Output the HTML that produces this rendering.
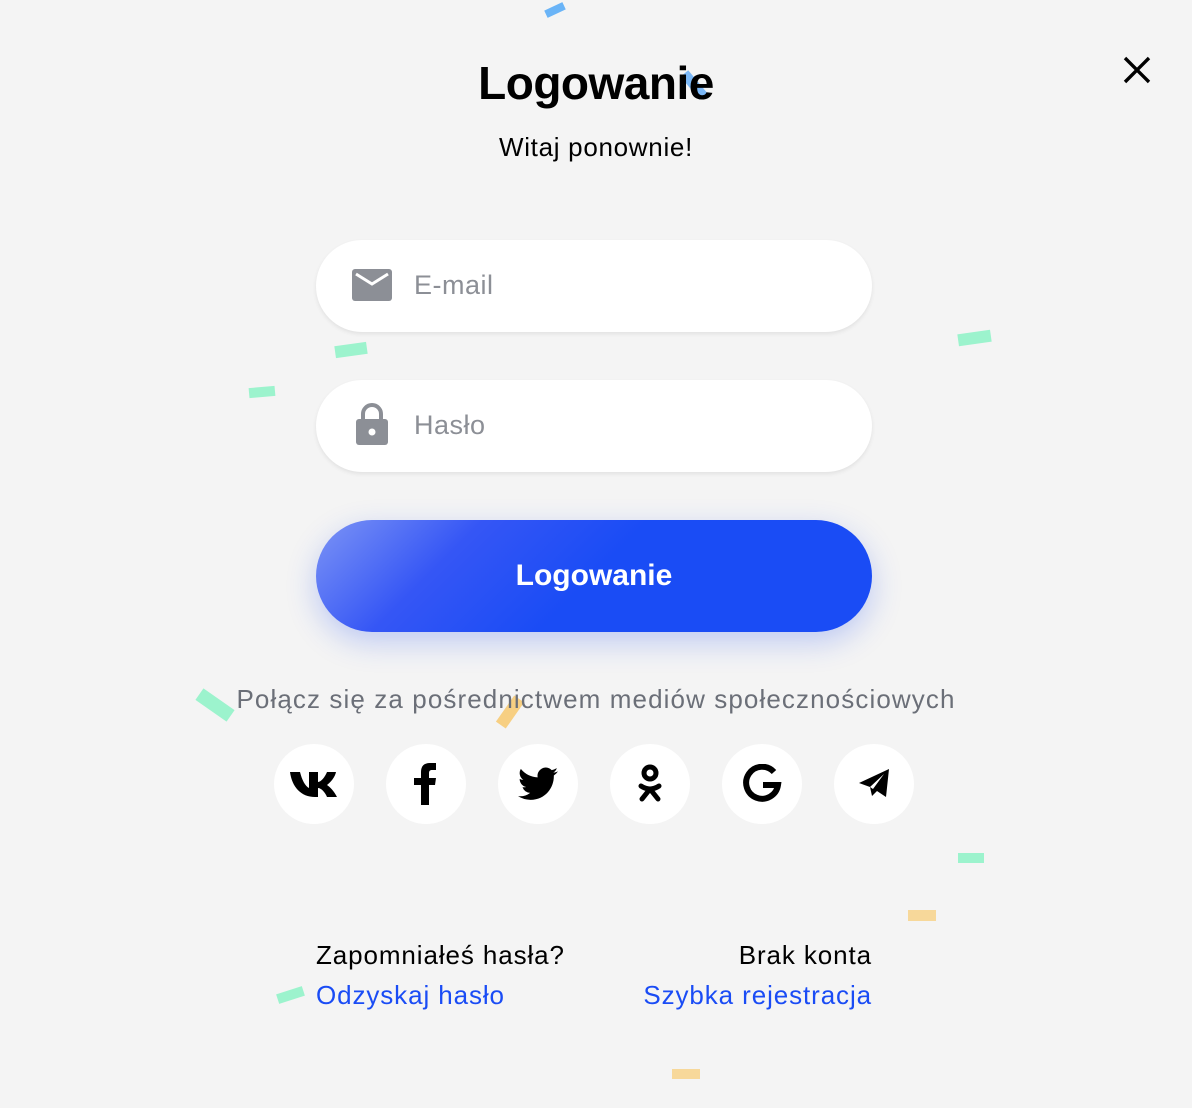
<!DOCTYPE html>
<html><head><meta charset="utf-8"><style>
*{margin:0;padding:0;box-sizing:border-box}
body{width:1192px;height:1108px;background:#f4f4f4;font-family:"Liberation Sans",sans-serif;position:relative;overflow:hidden}
.a{position:absolute}
h1{position:absolute;left:0;right:0;top:56px;text-align:center;font-size:46px;font-weight:bold;color:#000;letter-spacing:-0.5px}
.sub{top:132px;left:0;right:0;text-align:center;font-size:26px;color:#000;letter-spacing:0.7px}
.inp{left:316px;width:556px;height:92px;border-radius:46px;background:#fff;box-shadow:0 2px 4px rgba(0,0,0,.08)}
.inp span{position:absolute;left:98px;top:30px;font-size:27px;color:#8c8f96;letter-spacing:0.5px}
.btn{left:316px;top:520px;width:556px;height:112px;border-radius:56px;background:linear-gradient(135deg,#7d94f5 0%,#3556f5 25%,#1a4cf5 50%,#1a4cf5 100%);box-shadow:0 10px 30px rgba(26,76,245,.25);color:#fff;font-size:30px;font-weight:bold;text-align:center;line-height:112px}
.soc{top:684px;left:0;right:0;text-align:center;font-size:26px;color:#6b6f78;letter-spacing:1.1px}
.c{top:744px;width:80px;height:80px;border-radius:50%;background:#fff;display:flex;align-items:center;justify-content:center}
.t{font-size:26px;color:#000;letter-spacing:0.9px}
.l{font-size:26px;color:#1a4cf5;letter-spacing:0.9px}
.cf{position:absolute}
</style></head><body>
<div class="cf" style="left:545px;top:6px;width:20px;height:8px;background:#6ab4f7;transform:rotate(-25deg)"></div>
<div class="cf" style="left:679px;top:80px;width:30px;height:10px;background:#7bb8f7;transform:rotate(50deg)"></div>
<div class="cf" style="left:335px;top:344px;width:32px;height:12px;background:#9cf3cd;transform:rotate(-8deg)"></div>
<div class="cf" style="left:249px;top:387px;width:26px;height:10px;background:#9cf3cd;transform:rotate(-5deg)"></div>
<div class="cf" style="left:958px;top:332px;width:33px;height:12px;background:#9cf3cd;transform:rotate(-8deg)"></div>
<div class="cf" style="left:196px;top:698px;width:38px;height:14px;background:#9cf3cd;transform:rotate(35deg)"></div>
<div class="cf" style="left:494px;top:706px;width:32px;height:12px;background:#f7cf82;transform:rotate(-55deg)"></div>
<div class="cf" style="left:958px;top:853px;width:26px;height:10px;background:#9cf3cd"></div>
<div class="cf" style="left:908px;top:910px;width:28px;height:11px;background:#f7d89a"></div>
<div class="cf" style="left:277px;top:990px;width:27px;height:10px;background:#9cf3cd;transform:rotate(-18deg)"></div>
<div class="cf" style="left:672px;top:1069px;width:28px;height:10px;background:#f7d89a"></div>

<h1>Logowanie</h1>
<svg class="a" style="left:1122px;top:55px" width="30" height="30" viewBox="0 0 30 30"><path d="M3 3L27 27M27 3L3 27" stroke="#000" stroke-width="3.4"/></svg>
<div class="a sub">Witaj ponownie!</div>

<div class="a inp" style="top:240px">
<svg class="a" style="left:36px;top:29px" width="40" height="32" viewBox="0 0 40 32"><rect width="40" height="32" rx="3" fill="#8c8f96"/><path d="M4 5L20 15L36 5" stroke="#fff" stroke-width="3" fill="none"/></svg>
<span>E-mail</span></div>
<div class="a inp" style="top:380px">
<svg class="a" style="left:40px;top:23px" width="32" height="42" viewBox="0 0 32 42"><path d="M7 16V11a9 9 0 0 1 18 0v5" stroke="#8c8f96" stroke-width="4" fill="none"/><rect x="0" y="16" width="32" height="26" rx="3" fill="#8c8f96"/><circle cx="16" cy="29" r="3.5" fill="#fff"/></svg>
<span>Hasło</span></div>

<div class="a btn">Logowanie</div>
<div class="a soc">Połącz się za pośrednictwem mediów społecznościowych</div>

<div class="a c" style="left:274px"><svg width="50" height="28" viewBox="0 0 50 28"><path d="M1 2h10c2 8 5 14 9 16V2h9v10c3 0 7-5 9-10h9c-1 5-5 10-9 13 3 2 7 6 10 12H38c-2-5-6-9-9-9v9h-3C12 27 3 17 1 2z" fill="#000"/></svg></div>
<div class="a c" style="left:386px"><svg width="24" height="42" viewBox="0 0 24 42"><path d="M7 42V22H0v-7h7V9c0-6 3-9 9-9h6v7h-4c-2 0-3 1-3 3v5h7l-1 7h-6v20z" fill="#000"/></svg></div>
<div class="a c" style="left:498px"><svg width="40" height="36" viewBox="0 0 24 20"><path d="M24 2.4a10 10 0 0 1-2.8.8A5 5 0 0 0 23.3.5a10 10 0 0 1-3.1 1.2A4.9 4.9 0 0 0 11.8 6 14 14 0 0 1 1.7.9a4.9 4.9 0 0 0 1.5 6.6A5 5 0 0 1 1 6.9a4.9 4.9 0 0 0 3.9 4.9 5 5 0 0 1-2.2.1 4.9 4.9 0 0 0 4.6 3.4A9.900 9.900 0 0 1 0 17.300 14 14 0 0 0 7.5 19.5c9.1 0 14-7.5 14-14v-.6A10 10 0 0 0 24 2.4z" fill="#000"/></svg></div>
<div class="a c" style="left:610px"><svg width="24" height="40" viewBox="0 0 24 40"><circle cx="12" cy="9" r="6" stroke="#000" stroke-width="5" fill="none"/><path d="M3 22c6 4 12 4 18 0M12 25L4 35M12 25l8 10" stroke="#000" stroke-width="5" stroke-linecap="round" fill="none"/></svg></div>
<div class="a c" style="left:722px"><svg width="40" height="40" viewBox="0 0 40 40"><path d="M32 8A16 16 0 1 0 36 21H21" stroke="#000" stroke-width="6" fill="none"/></svg></div>
<div class="a c" style="left:834px"><svg width="32" height="30" viewBox="0 0 32 30"><path d="M1 14L31 0 28 28 19 22 14 27 12 18z" fill="#000"/><path d="M12 18L26 5 15 20z" fill="#fff"/></svg></div>

<div class="a t" style="left:316px;top:940px">Zapomniałeś hasła?</div>
<div class="a l" style="left:316px;top:980px">Odzyskaj hasło</div>
<div class="a t" style="right:320px;top:940px">Brak konta</div>
<div class="a l" style="right:320px;top:980px">Szybka rejestracja</div>
</body></html>
